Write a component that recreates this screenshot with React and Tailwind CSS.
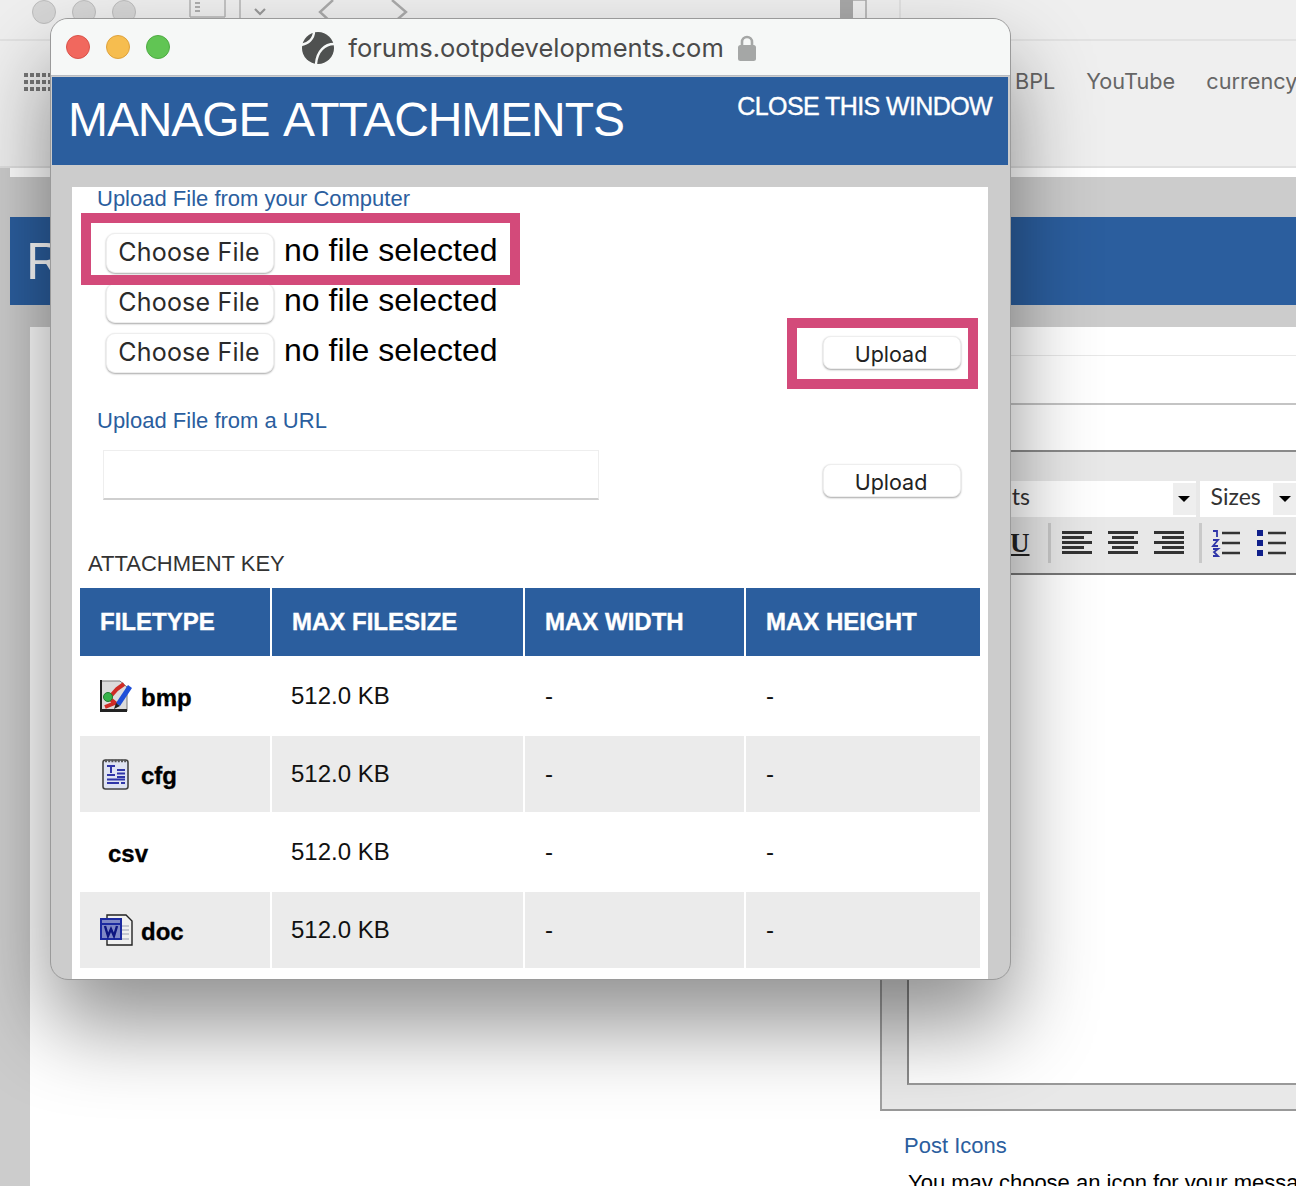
import React from "react";

const sans = "font-['Liberation_Sans',Arial,sans-serif]";
const sf = "font-['Inter','Noto_Sans',sans-serif]";

function Ball() {
  return (
    <svg width="34" height="34" viewBox="0 0 34 34" className="shrink-0">
      <circle cx="17" cy="17" r="16" fill="#4f5150" />
      <path d="M13 0 C13 8 7 13 0 14" fill="none" stroke="#f6f8f7" strokeWidth="2.4" />
      <path d="M33 13 C24 13 16 20 15 33" fill="none" stroke="#f6f8f7" strokeWidth="2.4" />
    </svg>
  );
}

function Lock() {
  return (
    <svg width="20" height="28" viewBox="0 0 20 28" className="shrink-0">
      <path d="M5 12V8a5 5 0 0 1 10 0v4" fill="none" stroke="#a5a7a6" strokeWidth="2.6" />
      <rect x="1" y="11" width="18" height="16" rx="2.5" fill="#a5a7a6" />
    </svg>
  );
}

function BmpIcon() {
  return (
    <svg width="32" height="32" viewBox="0 0 32 32" className="shrink-0 -ml-[2px]">
      <path d="M0 1H20L27 7V31H0Z" fill="#dcdcdc" stroke="#777" strokeWidth="1" />
      <path d="M0 0H2V32H0ZM0 29H27V32H0Z" fill="#222" />
      <path d="M5 27L15 23L9 18L17 9L24 4" fill="none" stroke="#cf2b25" strokeWidth="4" />
      <circle cx="8" cy="17" r="4.5" fill="#36b34a" stroke="#1f7a2e" strokeWidth="1" />
      <path d="M16 23L28 5L32 8L20 26Z" fill="#1f4fd8" />
      <path d="M16 23L20 26L14 29Z" fill="#222" />
    </svg>
  );
}

function CfgIcon() {
  return (
    <svg width="28" height="32" viewBox="0 0 28 32" className="shrink-0 -ml-[2px]">
      <rect x="1" y="2" width="25" height="29" rx="2.5" fill="#dfe3f2" stroke="#444" strokeWidth="1.6" />
      <path d="M3 3H24" stroke="#555" strokeWidth="2.6" strokeDasharray="2 1.2" />
      <path d="M5 8H13M9 8V15M5 17H13M15 12H23M15 15.5H23M15 19H23M5 21.5H23M5 25H17M19 25H23" stroke="#2f35a8" strokeWidth="2" fill="none" />
    </svg>
  );
}

function DocIcon() {
  return (
    <svg width="33" height="32" viewBox="0 0 33 32" className="shrink-0">
      <path d="M7 1H26L32 7V31H7Z" fill="#f0f0f0" stroke="#222" strokeWidth="1.4" />
      <path d="M20 12H29M20 16H29M20 20H29M12 25H29" stroke="#b5b9c6" strokeWidth="1.5" />
      <rect x="1" y="5" width="20" height="20" fill="#7f88c6" stroke="#1c2aa0" strokeWidth="2" />
      <path d="M2 10H20" stroke="#1c2aa0" strokeWidth="2" />
      <path d="M5 12L8 22L11 15L14 22L17 12" fill="none" stroke="#0d1580" strokeWidth="2.4" />
    </svg>
  );
}

function AlignIcon({ rows }) {
  return (
    <svg width="30" height="26" viewBox="0 0 30 26" className="shrink-0">
      {rows.map((r, i) => (
        <rect key={i} x={r[0]} y={1 + i * 5} width={r[1]} height="3" fill="#333" />
      ))}
    </svg>
  );
}

function ChooseRow() {
  return (
    <div className="flex items-center h-10">
      <button className={`${sf} w-[168px] h-10 bg-white rounded-[9px] border border-[#eeeeee] shadow-[0_1px_2px_rgba(0,0,0,0.35)] text-[25px] text-[#2a2a2a] tracking-[0.2px] pr-[2px]`}>
        Choose File
      </button>
      <span className="ml-[10px] text-[32px] leading-none text-black -mt-[6px]">no file selected</span>
    </div>
  );
}

function UploadButton({ className }) {
  return (
    <button className={`${sf} w-[138px] h-[33px] bg-white rounded-[8px] border border-[#eeeeee] shadow-[0_1px_2px_rgba(0,0,0,0.35)] text-[21.5px] leading-none text-[#222] pt-[5px] pr-[2px] ${className}`}>
      Upload
    </button>
  );
}

const attachmentTypes = [
  { name: "bmp", icon: <BmpIcon />, h: "h-20", bg: "bg-white" },
  { name: "cfg", icon: <CfgIcon />, h: "h-[76px]", bg: "bg-[#ebebeb]" },
  { name: "csv", icon: null, h: "h-20", bg: "bg-white" },
  { name: "doc", icon: <DocIcon />, h: "h-[76px]", bg: "bg-[#ebebeb]" },
];

const gridCols = "grid grid-cols-[190px_251px_219px_234px] gap-x-[2px]";

function AttachmentTable() {
  return (
    <div className="mx-2 w-[900px]">
      <div className={`${gridCols} h-[68px] text-white font-bold text-[24px] [-webkit-text-stroke:0.4px_white]`}>
        {["FILETYPE", "MAX FILESIZE", "MAX WIDTH", "MAX HEIGHT"].map((t) => (
          <div key={t} className="bg-[#2b5e9e] flex items-center pl-5">{t}</div>
        ))}
      </div>
      {attachmentTypes.map((row) => (
        <div key={row.name} className={`${gridCols} ${row.h} text-[24px] text-[#111]`}>
          <div className={`${row.bg} flex items-center pl-5 font-bold text-[24px] text-black [-webkit-text-stroke:0.3px_black]`}>
            {row.icon && <span className="w-[41px] shrink-0 flex justify-center pr-[8px]">{row.icon}</span>}
            <span className={`pt-1 ${row.icon ? "" : "pl-2"}`}>{row.name}</span>
          </div>
          <div className={`${row.bg} flex items-center pl-[19px]`}>512.0 KB</div>
          <div className={`${row.bg} flex items-center pl-5`}>-</div>
          <div className={`${row.bg} flex items-center pl-5`}>-</div>
        </div>
      ))}
    </div>
  );
}

function Modal() {
  return (
    <div className={`${sans} absolute left-[50px] top-[18px] w-[961px] h-[962px] rounded-[18px] bg-[#cccccc] border border-[#9a9a9a] overflow-hidden shadow-[0_45px_85px_rgba(0,0,0,0.44)]`}>
      <div className={`${sf} h-[57px] bg-[#f6f8f7] border-b border-[#b8bcc2] relative flex items-center justify-center text-[#4a4a4a]`}>
        <div className="absolute left-[15px] top-[16px] flex gap-4">
          <span className="w-6 h-6 rounded-full bg-[#f1685e] border border-[#d9534a]" />
          <span className="w-6 h-6 rounded-full bg-[#f6bd4f] border border-[#dea23c]" />
          <span className="w-6 h-6 rounded-full bg-[#61c554] border border-[#4fab44]" />
        </div>
        <div className="flex items-center gap-[13px] mr-[3px] mt-[2px]">
          <Ball />
          <span className="text-[25.5px]">forums.ootpdevelopments.com</span>
          <Lock />
        </div>
      </div>
      <div className="ml-px mr-[2px] mt-px h-[88px] bg-[#2b5e9e] text-white flex justify-between">
        <div className="text-[48px] tracking-[-1.1px] [word-spacing:4px] leading-none pl-4 pt-[19px]">MANAGE ATTACHMENTS</div>
        <div className="text-[25px] leading-none tracking-[-0.6px] pr-4 pt-[17px] [-webkit-text-stroke:0.4px_white]">CLOSE THIS WINDOW</div>
      </div>
      <div className="mt-[22px] ml-[21px] mr-[22px] bg-white h-[792px]">
        <div className="pl-[25px] text-[22px] leading-6 text-[#2b5e9e]">Upload File from your Computer</div>
        <div className="mt-[22px] flex justify-between items-end pl-[34px] pr-[27px]">
          <div className="flex flex-col gap-[10px]">
            <ChooseRow />
            <ChooseRow />
            <ChooseRow />
          </div>
          <UploadButton className="mb-1" />
        </div>
        <div className="mt-[36px] pl-[25px] text-[22px] leading-6 text-[#2b5e9e]">Upload File from a URL</div>
        <div className="mt-[17px] flex justify-between pl-[31px] pr-[27px]">
          <div className="w-[496px] h-[50px] bg-white border border-[#eeeeee] border-b-2 border-b-[#cfcfcf]" />
          <UploadButton className="mt-[14px]" />
        </div>
        <div className="mt-[52px] pl-4 text-[22px] leading-6 text-[#333]">ATTACHMENT KEY</div>
        <div className="mt-3">
          <AttachmentTable />
        </div>
      </div>
      {/* annotation boxes drawn on the screenshot */}
      <div className="absolute left-[30px] top-[194px] w-[439px] h-[72px] border-[10px] border-[#d34a7a]" />
      <div className="absolute left-[736px] top-[299px] w-[191px] h-[71px] border-[10px] border-[#d34a7a]" />
    </div>
  );
}

function Toolbar() {
  return (
    <div className="h-[41px] border-b-2 border-[#e2e2e2] flex items-start relative overflow-hidden">
      <div className="flex gap-4 pl-8 pt-0">
        {[0, 1, 2].map((i) => (
          <span key={i} className="w-6 h-6 rounded-full bg-[#d6d6d6] border border-[#bdbdbd]" />
        ))}
      </div>
      <svg width="260" height="40" viewBox="0 0 260 40" className="ml-[53px] shrink-0">
        <path d="M1 0V17M36 0V17M1 17H36M51 0V40" fill="none" stroke="#b5b5b5" strokeWidth="1.5" />
        <path d="M6 3H11M6 7H11M6 11H11" stroke="#999" strokeWidth="1.5" />
        <path d="M66 9L71 14L76 9" fill="none" stroke="#999" strokeWidth="2.2" />
        <path d="M144 0L131 12L144 24M203 0L217 12L203 24" fill="none" stroke="#aaa" strokeWidth="2.4" />
      </svg>
      <svg width="61" height="40" viewBox="0 0 61 40" className="ml-[391px] shrink-0">
        <path d="M0 0H13V20H0Z" fill="#a8a8a8" />
        <path d="M13 0H26V20" fill="none" stroke="#aaa" strokeWidth="1.5" />
        <path d="M60 0V40" stroke="#dcdcdc" strokeWidth="1.5" />
      </svg>
    </div>
  );
}

function Bookmarks() {
  return (
    <div className="h-[127px] border-b-2 border-[#e0e0e0] flex items-start pt-[24px] relative">
      <svg width="28" height="20" viewBox="0 0 28 20" className="ml-6 mt-[8px] shrink-0">
        {[0, 1, 2].map((r) =>
          [0, 1, 2, 3, 4].map((c) => <rect key={`${r}${c}`} x={c * 6} y={r * 7} width="4" height="4" fill="#777" />)
        )}
      </svg>
      <div className={`${sf} flex gap-[31px] ml-[963px] text-[21.7px] text-[#666] whitespace-nowrap`}>
        <span>BPL</span>
        <span>YouTube</span>
        <span>currency</span>
      </div>
    </div>
  );
}

function EditorFrame() {
  return (
    <div className="ml-[850px] w-[416px] h-[661px] border-t-2 border-t-[#8a8a8a] border-l-2 border-l-[#a0a0a0] border-b-2 border-b-[#999] bg-[#e8e8e8]">
      <div className="pt-[29px] flex pl-[78px] h-[67px] font-['Lato',sans-serif] text-[23px] text-[#333]">
        <div className="w-[237px] h-9 bg-white flex items-center justify-between pl-[14px]">
          <span className="-mt-[5px]">Fonts</span>
          <span className="w-[23px] h-8 bg-[#eeeeee] flex items-center justify-center">
            <span className="border-x-[6px] border-x-transparent border-t-[6px] border-t-black" />
          </span>
        </div>
        <div className="ml-1 w-[97px] h-9 bg-white flex items-center justify-between pl-[11px]">
          <span className="-mt-[5px]">Sizes</span>
          <span className="w-[23px] h-8 bg-[#eeeeee] flex items-center justify-center">
            <span className="border-x-[6px] border-x-transparent border-t-[6px] border-t-black" />
          </span>
        </div>
      </div>
      <div className="h-[56px] border-b-2 border-[#777] flex items-center pb-[6px]">
        <span className="ml-[128px] font-['Liberation_Serif',serif] font-bold text-[27px] leading-none underline text-[#222]">U</span>
        <span className="ml-[18px] w-[3px] h-10 bg-[#c9c9c9]" />
        <div className="ml-[11px] flex gap-4">
          <AlignIcon rows={[[0, 30], [0, 22], [0, 30], [0, 22], [0, 30]]} />
          <AlignIcon rows={[[0, 30], [4, 22], [0, 30], [4, 22], [0, 30]]} />
          <AlignIcon rows={[[0, 30], [8, 22], [0, 30], [8, 22], [0, 30]]} />
        </div>
        <span className="ml-[15px] w-[3px] h-10 bg-[#c9c9c9]" />
        <svg width="30" height="28" viewBox="0 0 30 28" className="ml-[9px] shrink-0">
          <path d="M2 2H6V8M2 11H7L2 17H7M2 20H7L3 23L7 27H2" fill="none" stroke="#2f35a8" strokeWidth="1.8" />
          <path d="M11 4H29M11 14H29M11 24H29" stroke="#333" strokeWidth="2.4" />
        </svg>
        <svg width="30" height="28" viewBox="0 0 30 28" className="ml-4 shrink-0">
          <path d="M0 1H6V7H0ZM0 11H6V17H0ZM0 21H6V27H0Z" fill="#0f1f8a" />
          <path d="M11 4H29M11 14H29M11 24H29" stroke="#333" strokeWidth="2.4" />
        </svg>
      </div>
      <div className="ml-[25px] h-[510px] bg-white border-l-2 border-l-[#8a8a8a] border-b-2 border-b-[#999]" />
    </div>
  );
}

export default function App() {
  return (
    <div className={`${sans} relative w-[1296px] h-[1186px] overflow-hidden bg-[#cccccc]`}>
      <div className="bg-[#efefef]">
        <Toolbar />
        <Bookmarks />
      </div>
      <div className="h-[9px] ml-[10px] bg-white" />
      <div className="mt-[40px] ml-[10px] h-[88px] bg-[#2b5e9e] text-white text-[52px] leading-[88px] pl-4">R</div>
      <div className="mt-[22px] ml-[30px] h-[859px] bg-white">
        <div className="h-[28px]" />
        <div className="h-[50px] ml-[100px] border-t border-[#e8e8e8] border-b-2 border-b-[#c4c4c4]" />
        <div className="h-[45px]" />
        <EditorFrame />
        <div className="ml-[874px] mt-[23px] text-[22px] leading-6 text-[#2b5e9e]">Post Icons</div>
        <div className="ml-[878px] mt-[13px] text-[22px] leading-6 text-black whitespace-nowrap">You may choose an icon for your message</div>
      </div>
      <Modal />
    </div>
  );
}
